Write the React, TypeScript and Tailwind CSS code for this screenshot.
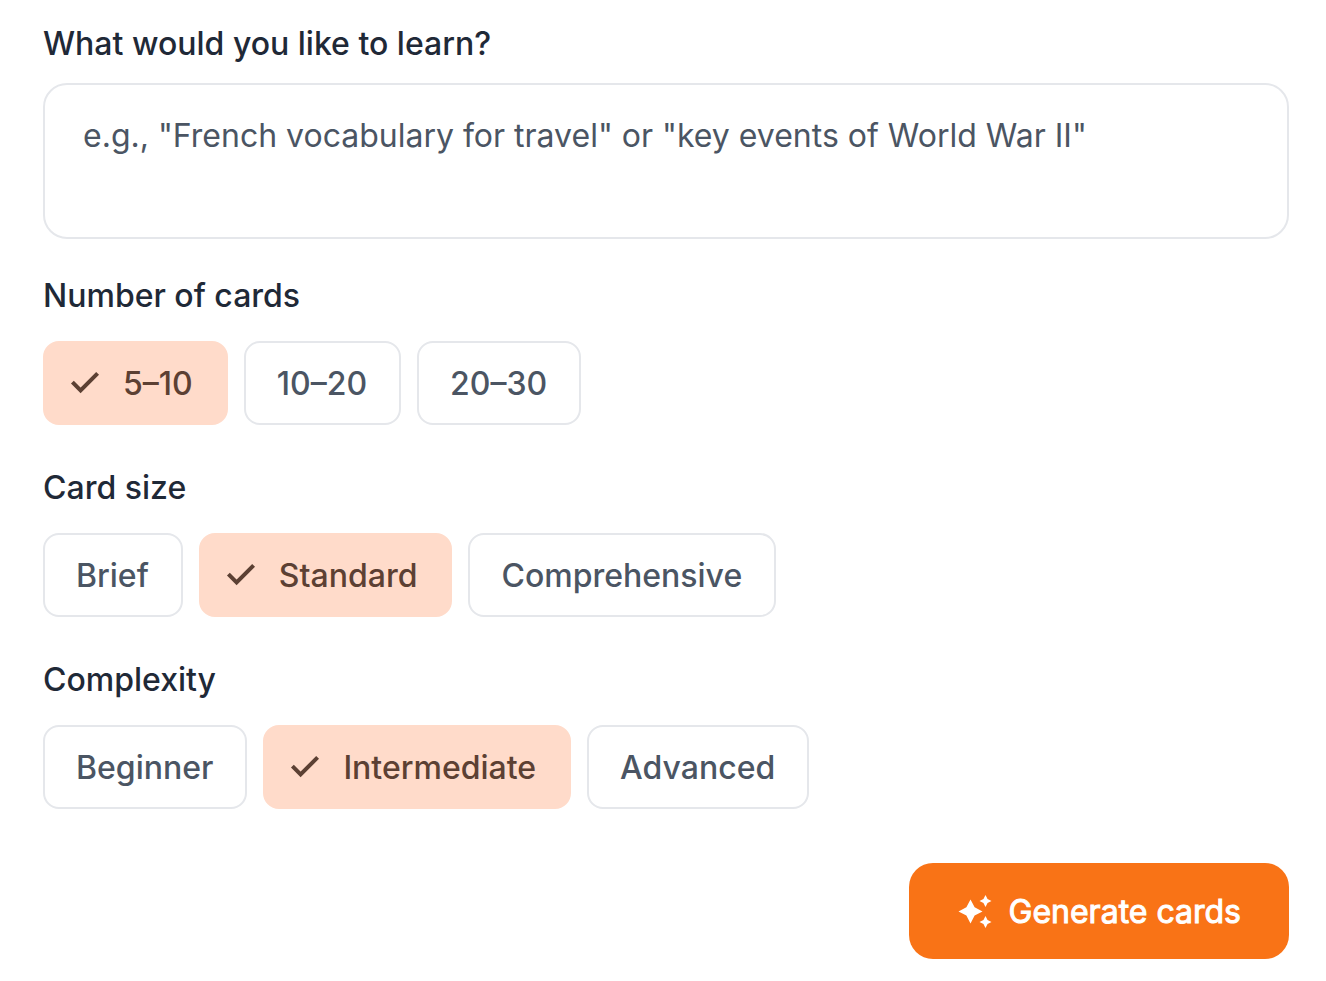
import { useState } from 'react';

const groups = [
  { name: 'count', title: 'Number of cards', options: ['5–10', '10–20', '20–30'], initial: '5–10' },
  { name: 'size', title: 'Card size', options: ['Brief', 'Standard', 'Comprehensive'], initial: 'Standard' },
  { name: 'complexity', title: 'Complexity', options: ['Beginner', 'Intermediate', 'Advanced'], initial: 'Intermediate' },
];

const CheckIcon = () => (
  <svg viewBox="0 0 36 36" className="size-9 shrink-0" fill="none" stroke="currentColor" strokeWidth="4" aria-hidden="true">
    <path d="M5.4 16.2 L13.6 24.4 L30.6 7.4" />
  </svg>
);

const SparkleIcon = () => (
  <svg viewBox="0 0 24 24" className="size-9 shrink-0" fill="currentColor" aria-hidden="true">
    <path d="M9 3.6l2.75 5.25L17 11.6l-5.25 2.75L9 19.6l-2.75-5.25L1 11.6l5.25-2.75z" />
    <path d="M19 .6l1.35 2.65L23 4.6l-2.65 1.35L19 8.6l-1.35-2.65L15 4.6l2.65-1.35z" />
    <path d="M19 14.6l1.35 2.65L23 18.6l-2.65 1.35L19 22.6l-1.35-2.65L15 18.6l2.65-1.35z" />
  </svg>
);

// one row of selectable chips
const ChipGroup = ({ name, title, options, initial }: (typeof groups)[number]) => {
  const [selected, setSelected] = useState(initial);

  return (
    <fieldset>
      <legend className="mb-[21px] font-medium text-[#1f2937]">{title}</legend>
      <div className="flex flex-wrap gap-4">
        {options.map((option) => (
          <label
            key={option}
            className={`flex h-21 cursor-pointer items-center rounded-2xl border-2 pt-0.5 font-medium has-focus-visible:outline-2 ${
              option === selected
                ? 'gap-5 border-[#ffdbca] bg-[#ffdbca] pr-[33px] pl-[22px] text-[#5c4033]'
                : 'border-[#e5e7eb] pr-8 pl-[31px] text-[#4b5563]'
            }`}
          >
            <input
              type="radio"
              name={name}
              value={option}
              checked={option === selected}
              onChange={() => setSelected(option)}
              className="sr-only"
            />
            {option === selected && <CheckIcon />}
            {option}
          </label>
        ))}
      </div>
    </fieldset>
  );
};

export default function App() {
  const [topic, setTopic] = useState('');

  return (
    <form
      className="flex min-h-screen flex-col bg-white pt-5 pr-[37px] pl-[43px] font-['Inter',sans-serif] text-[32px] leading-12"
      onSubmit={(e) => e.preventDefault()}
    >
      {/* topic */}
      <label htmlFor="topic" className="mb-[15px] font-medium text-[#1f2937]">
        What would you like to learn?
      </label>
      <textarea
        id="topic"
        rows={2}
        value={topic}
        onChange={(e) => setTopic(e.target.value)}
        placeholder={'e.g., "French vocabulary for travel" or "key events of World War II"'}
        className="mb-[33px] h-39 resize-none rounded-3xl border-2 border-[#e5e7eb] px-[38px] py-[27px] text-[#4b5563] placeholder:text-[#4b5563]"
      />

      {/* card options */}
      <div className="flex flex-col gap-[39px]">
        {groups.map((group) => (
          <ChipGroup key={group.name} {...group} />
        ))}
      </div>

      <button
        type="submit"
        className="mt-[54px] flex h-24 items-center gap-4 self-end rounded-3xl bg-[#f97316] px-12 pt-0.5 font-normal text-white [-webkit-text-stroke:1px_white]"
      >
        <SparkleIcon />
        Generate cards
      </button>
    </form>
  );
}
